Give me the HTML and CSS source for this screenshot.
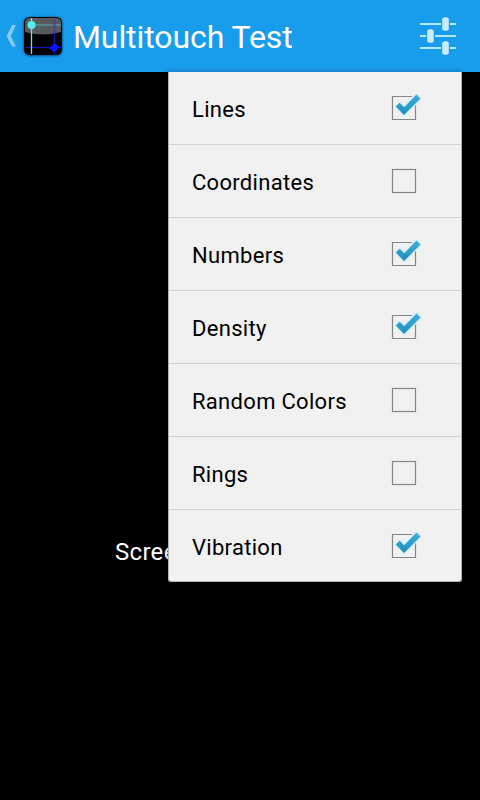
FILE: index.html
```html
<!DOCTYPE html>
<html lang="en">
<head>
<meta charset="utf-8">
<title>Multitouch Test</title>
<link rel="stylesheet" href="styles.css">
</head>
<body>
<svg width="0" height="0" class="defs" aria-hidden="true">
  <defs>
    <linearGradient id="tick" x1="0" y1="0" x2="0" y2="1"><stop offset="0" stop-color="#42b0d6"/><stop offset="1" stop-color="#1b8dbb"/></linearGradient>
    <filter id="glow" x="-30%" y="-30%" width="160%" height="160%"><feGaussianBlur stdDeviation="1.3"/></filter>
    <symbol id="off" viewBox="0 0 34 34"><rect x="3.5" y="6.5" width="23" height="23" fill="none" stroke="#858585" stroke-width="1.2"/></symbol>
    <symbol id="on" viewBox="0 0 34 34">
      <path d="M23 6.500H3.500v23h23V15" fill="none" stroke="#858585" stroke-width="1.2"/>
      <path d="M6.800 16.500l3.800-3.800 4.600 4.600L27.500 4.500l4 4L15 25z" fill="#c9edf9" stroke="#c9edf9" stroke-width="2" filter="url(#glow)"/>
      <path d="M6.800 16.500l3.800-3.800 4.600 4.600L27.500 4.500l4 4L15 25z" fill="url(#tick)"/>
    </symbol>
  </defs>
</svg>
<div class="screen">
  <header class="bar">
    <svg class="back" width="12" height="24" viewBox="0 0 12 24"><path d="M6.200 1h3.600L4.800 12l5 10.500H6.200L.5 12z" fill="#86cdfa"/></svg>
    <svg class="logo" width="44" height="44" viewBox="0 0 44 44">
      <rect x="2.500" y="3" width="39" height="39" rx="6" fill="#064f86" filter="url(#glow)"/>
      <rect x="3" y="3" width="38" height="38" rx="5.500" fill="#000"/>
      <path d="M4 9q0-5 5-5h26q5 0 5 5v9q-18 5-36 0z" fill="#565a5c"/>
      <path d="M11 11H40" stroke="#569da2" stroke-width="1.200"/>
      <path d="M33.500 5V40M4 33.500H40" stroke="#1417b5" stroke-width="1.200"/>
      <path d="M33.500 5V19" stroke="#45479b" stroke-width="1.200"/>
      <path d="M10.500 4V40" stroke="#66e6f2" stroke-width="1.300"/>
      <circle cx="10.500" cy="11" r="4" fill="#52eeee"/>
      <path d="M33.500 28l2 3.500 4 2-4 2-2 4-2-3-4-2.500 4-2.500z" fill="#0a12ff"/><circle cx="33.500" cy="33.500" r="3.600" fill="#0a12ff"/>
    </svg>
    <h1 class="title">Multitouch Test</h1>
    <svg class="settings" width="38" height="40" viewBox="0 0 38 40">
      <path d="M1 8H22M31 8H37M1 20H7M16 20H37M1 32H22M31 32H37" stroke="#b4e9ff" stroke-width="2"/>
      <g fill="#cdebff"><rect x="23.200" y="1.200" width="6.600" height="13.600" rx="2.500"/><rect x="8.200" y="13.200" width="6.600" height="13.600" rx="2.500"/><rect x="23.200" y="25.200" width="6.600" height="13.600" rx="2.500"/></g>
    </svg>
  </header>
  <main class="canvas"><p class="hint">Scree</p></main>
  <ul class="menu">
    <li class="item"><span class="label">Lines</span><svg class="check"><use href="#on"/></svg></li>
    <li class="item"><span class="label">Coordinates</span><svg class="check"><use href="#off"/></svg></li>
    <li class="item"><span class="label">Numbers</span><svg class="check"><use href="#on"/></svg></li>
    <li class="item"><span class="label">Density</span><svg class="check"><use href="#on"/></svg></li>
    <li class="item"><span class="label">Random Colors</span><svg class="check"><use href="#off"/></svg></li>
    <li class="item"><span class="label">Rings</span><svg class="check"><use href="#off"/></svg></li>
    <li class="item"><span class="label">Vibration</span><svg class="check"><use href="#on"/></svg></li>
  </ul>
</div>
</body>
</html>
```
FILE: styles.css
```css
* { box-sizing: border-box; }
body { margin: 0; background: #000; font-family: Roboto, sans-serif; }
.defs { position: absolute; }
.screen { position: relative; width: 480px; height: 800px; overflow: hidden; background: #000; }
.bar { display: flex; align-items: center; height: 72px; padding: 0 23px 0 6px; background: #189cec; }
.back { flex: none; }
.logo { flex: none; margin-left: 3px; }
.title { flex: 1; margin: 2px 0 0 8px; color: #fff; font-size: 32px; font-weight: 400; line-height: 40px; letter-spacing: -0.08px; white-space: nowrap; }
.settings { flex: none; }
.canvas { padding: 465px 0 0 115px; }
.hint { margin: 0; color: #fff; font-size: 24px; line-height: 30px; letter-spacing: 0.3px; }
.menu { position: absolute; left: 168px; top: 72px; width: 294px; height: 510px; margin: 0; padding: 0; list-style: none; background: #f1f1f1; border: solid #b0b0b0; border-width: 0 1px 1px; border-radius: 0 0 3px 3px; box-shadow: 0 0 5px rgba(0, 0, 0, .3); }
.item { display: flex; align-items: flex-start; justify-content: space-between; height: 73px; padding: 18px 38px 0 23px; border-bottom: 1px solid #d2d2d2; }
.item:last-child { height: 71px; border-bottom: 0; }
.label { padding-top: 6px; color: #000; font-size: 22px; line-height: 28px; letter-spacing: 0.3px; }
.check { flex: none; width: 34px; height: 34px; }
```
